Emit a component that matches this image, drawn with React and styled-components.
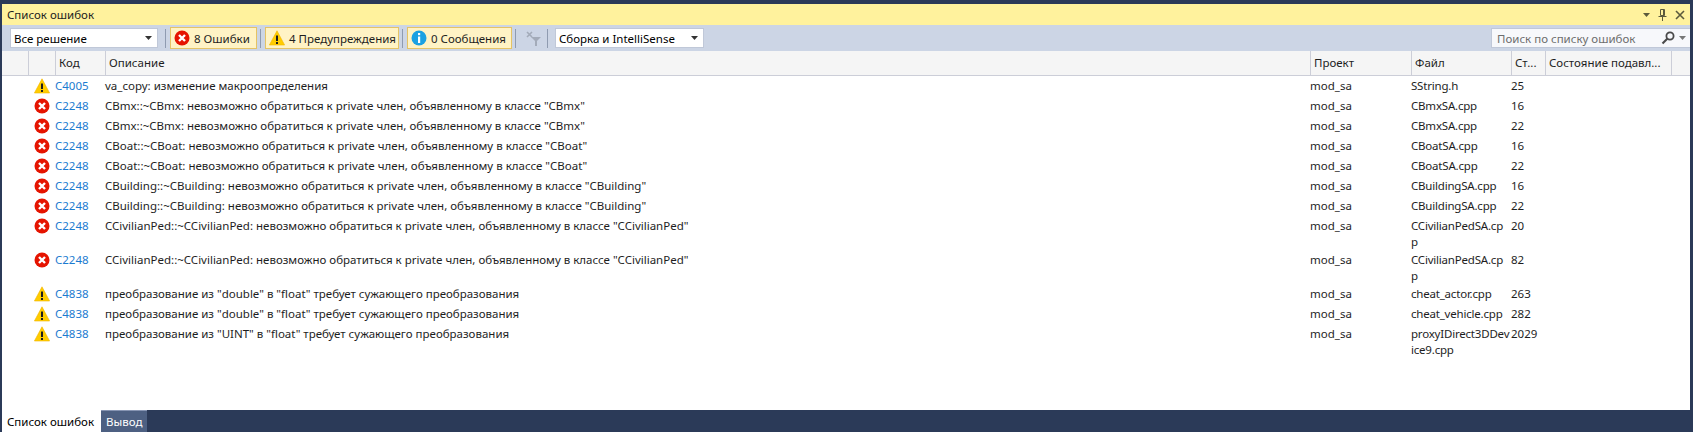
import React from "react";
import styled, { createGlobalStyle } from "styled-components";

const COLUMNS = "26px 27px 50px 1205px 101px 100px 34px 126px 19px";

const errors = [
  { kind: "warning", code: "C4005", text: "va_copy: изменение макроопределения", file: "SString.h", line: "25" },
  { kind: "error", code: "C2248", text: 'CBmx::~CBmx: невозможно обратиться к private член, объявленному в классе "CBmx"', file: "CBmxSA.cpp", line: "16" },
  { kind: "error", code: "C2248", text: 'CBmx::~CBmx: невозможно обратиться к private член, объявленному в классе "CBmx"', file: "CBmxSA.cpp", line: "22" },
  { kind: "error", code: "C2248", text: 'CBoat::~CBoat: невозможно обратиться к private член, объявленному в классе "CBoat"', file: "CBoatSA.cpp", line: "16" },
  { kind: "error", code: "C2248", text: 'CBoat::~CBoat: невозможно обратиться к private член, объявленному в классе "CBoat"', file: "CBoatSA.cpp", line: "22" },
  { kind: "error", code: "C2248", text: 'CBuilding::~CBuilding: невозможно обратиться к private член, объявленному в классе "CBuilding"', file: "CBuildingSA.cpp", line: "16" },
  { kind: "error", code: "C2248", text: 'CBuilding::~CBuilding: невозможно обратиться к private член, объявленному в классе "CBuilding"', file: "CBuildingSA.cpp", line: "22" },
  { kind: "error", code: "C2248", text: 'CCivilianPed::~CCivilianPed: невозможно обратиться к private член, объявленному в классе "CCivilianPed"', file: "CCivilianPedSA.cp\np", line: "20" },
  { kind: "error", code: "C2248", text: 'CCivilianPed::~CCivilianPed: невозможно обратиться к private член, объявленному в классе "CCivilianPed"', file: "CCivilianPedSA.cp\np", line: "82" },
  { kind: "warning", code: "C4838", text: 'преобразование из "double" в "float" требует сужающего преобразования', file: "cheat_actor.cpp", line: "263" },
  { kind: "warning", code: "C4838", text: 'преобразование из "double" в "float" требует сужающего преобразования', file: "cheat_vehicle.cpp", line: "282" },
  { kind: "warning", code: "C4838", text: 'преобразование из "UINT" в "float" требует сужающего преобразования', file: "proxyIDirect3DDev\nice9.cpp", line: "2029" },
];

const GlobalStyle = createGlobalStyle`
  html, body {
    margin: 0;
    padding: 0;
    background: #2b3a58;
  }
  body {
    font-family: "Noto Sans", "Open Sans", sans-serif;
    font-size: 11.5px;
    color: #1e1e1e;
  }
`;

const Window = styled.div`
  width: 1693px;
  height: 432px;
  box-sizing: border-box;
  padding: 4px 3px 0 2px;
  background: #2b3a58;
  display: flex;
  flex-direction: column;
  overflow: hidden;
`;

const TitleBar = styled.div`
  height: 21px;
  flex: none;
  background: #fff29d;
  display: flex;
  align-items: center;
  justify-content: space-between;
  padding: 0 5px;
  color: #1e1e1e;
`;

const TitleIcons = styled.div`
  display: flex;
  align-items: center;
  gap: 8px;
`;

const Toolbar = styled.div`
  height: 26px;
  flex: none;
  background: #ccd5e5;
  display: flex;
  align-items: center;
  padding-left: 8px;
`;

const Select = styled.div`
  width: ${(p) => p.$width}px;
  height: 20px;
  box-sizing: border-box;
  background: #fff;
  border: 1px solid #c0c8d8;
  display: flex;
  align-items: center;
  justify-content: space-between;
  padding: 0 5px 0 3px;
  color: #000;
`;

const Divider = styled.div`
  width: 1px;
  height: 19px;
  background: #8f9bb0;
  margin: 0 ${(p) => p.$right ?? 4}px 0 ${(p) => p.$left ?? 3}px;
`;

const FilterButton = styled.div`
  height: 22px;
  box-sizing: border-box;
  width: ${(p) => p.$width}px;
  background: #fff3c5;
  border: 1px solid #e5c365;
  display: flex;
  align-items: center;
  gap: 4px;
  padding-left: 3px;
  color: #1e1e1e;
  white-space: nowrap;
`;

const FilterIconBox = styled.div`
  display: flex;
  margin: 0 5px 0 6px;
`;

const SearchBox = styled.div`
  margin-left: auto;
  width: 199px;
  height: 20px;
  box-sizing: border-box;
  background: #f7f8fb;
  border: 1px solid #c0c8d8;
  border-right: none;
  display: flex;
  align-items: center;
  justify-content: space-between;
  padding: 0 4px 0 5px;
  color: #6d6d6d;
`;

const SearchIcons = styled.div`
  display: flex;
  align-items: center;
  gap: 4px;
`;

const Body = styled.div`
  flex: 1;
  background: #fff;
  min-height: 0;
`;

const HeaderRow = styled.div`
  display: grid;
  grid-template-columns: ${COLUMNS};
  height: 25px;
  box-sizing: border-box;
  background: #f5f5f5;
  border-bottom: 1px solid #ccced8;
`;

const HeaderCell = styled.div`
  border-left: ${(p) => (p.$first ? "none" : "1px solid #ccced8")};
  padding-left: 3px;
  line-height: 24px;
  white-space: nowrap;
  color: #1e1e1e;
`;

const Row = styled.div`
  display: grid;
  grid-template-columns: ${COLUMNS};
  min-height: 20px;
  padding-top: 2px;
  box-sizing: border-box;
  line-height: 16px;
`;

const IconCell = styled.div`
  grid-column: 2;
  display: flex;
  align-items: flex-start;
  justify-content: center;
`;

const Code = styled.div`
  color: #1b7bd0;
`;

const Cell = styled.div`
  white-space: pre;
  color: #1e1e1e;
  letter-spacing: ${(p) => (p.$tight ? "-0.2px" : "0")};
`;

const TabStrip = styled.div`
  height: 22px;
  flex: none;
  background: #2b3a58;
  display: flex;
  margin-right: -3px;
`;

const Tab = styled.div`
  padding: 0 5px;
  width: ${(p) => p.$width}px;
  box-sizing: border-box;
  line-height: 21px;
  white-space: nowrap;
  background: ${(p) => (p.$active ? "#fff" : "#4d6082")};
  color: ${(p) => (p.$active ? "#000" : "#fff")};
  border-top: 1px solid ${(p) => (p.$active ? "#fff" : "#8795b3")};
`;

const ErrorIcon = () => (
  <svg width="16" height="16" viewBox="0 0 16 16">
    <circle cx="8" cy="8" r="7.5" fill="#e51400" />
    <path d="M5 5l6 6M11 5l-6 6" stroke="#fff" strokeWidth="2.4" />
  </svg>
);

const WarningIcon = () => (
  <svg width="16" height="16" viewBox="0 0 16 16">
    <path d="M8 .8L15.6 15H.4z" fill="#ffcc00" stroke="#f2b600" strokeWidth=".6" />
    <rect x="7" y="5.5" width="2" height="5.5" fill="#1e1e1e" />
    <rect x="7" y="12" width="2" height="2" fill="#1e1e1e" />
  </svg>
);

const InfoIcon = () => (
  <svg width="16" height="16" viewBox="0 0 16 16">
    <circle cx="8" cy="8" r="7.5" fill="#1ba1e2" />
    <rect x="7" y="3" width="2.2" height="2.2" fill="#fff" />
    <rect x="7" y="6.5" width="2.2" height="6.5" fill="#fff" />
  </svg>
);

const FilterIcon = () => (
  <svg width="16" height="16" viewBox="0 0 16 16" fill="#a3abb9">
    <path d="M1 2l5 5M6 2L1 7" stroke="#a3abb9" strokeWidth="1.6" />
    <path d="M5 7h10l-4 4v5H9v-5z" />
  </svg>
);

const Caret = ({ color = "#333" }) => (
  <svg width="7" height="4" viewBox="0 0 7 4">
    <path d="M0 0h7L3.5 4z" fill={color} />
  </svg>
);

const PinIcon = () => (
  <svg width="9" height="12" viewBox="0 0 9 12" fill="none" stroke="#5b5a3c">
    <path d="M2.5.5h4v6h-4zM.5 7.5h8M4.5 8v4M5.5 1v5" />
  </svg>
);

const CloseIcon = () => (
  <svg width="10" height="10" viewBox="0 0 10 10">
    <path d="M1 1l8 8M9 1l-8 8" stroke="#5b5a3c" strokeWidth="1.6" />
  </svg>
);

const SearchIcon = () => (
  <svg width="14" height="14" viewBox="0 0 14 14" fill="none">
    <circle cx="9" cy="5" r="3.6" stroke="#4a4a4a" strokeWidth="1.8" />
    <path d="M6.5 7.5L1.5 12.5" stroke="#4a4a4a" strokeWidth="2.2" />
  </svg>
);

const icons = { error: <ErrorIcon />, warning: <WarningIcon /> };

const App = () => {
  return (
    <Window>
      <GlobalStyle />
      <TitleBar>
        <span>Список ошибок</span>
        <TitleIcons>
          <Caret color="#5b5a3c" />
          <PinIcon />
          <CloseIcon />
        </TitleIcons>
      </TitleBar>
      <Toolbar>
        <Select $width={148}>
          Все решение
          <Caret />
        </Select>
        <Divider $left={7} />
        <FilterButton $width={87}>
          <ErrorIcon />8 Ошибки
        </FilterButton>
        <Divider />
        <FilterButton $width={134}>
          <WarningIcon />4 Предупреждения
        </FilterButton>
        <Divider />
        <FilterButton $width={105}>
          <InfoIcon />0 Сообщения
        </FilterButton>
        <Divider />
        <FilterIconBox>
          <FilterIcon />
        </FilterIconBox>
        <Divider $left={0} $right={7} />
        <Select $width={149}>
          Сборка и IntelliSense
          <Caret />
        </Select>
        <SearchBox>
          Поиск по списку ошибок
          <SearchIcons>
            <SearchIcon />
            <Caret color="#777" />
          </SearchIcons>
        </SearchBox>
      </Toolbar>
      <Body>
        <HeaderRow>
          <HeaderCell $first />
          <HeaderCell />
          <HeaderCell>Код</HeaderCell>
          <HeaderCell>Описание</HeaderCell>
          <HeaderCell>Проект</HeaderCell>
          <HeaderCell>Файл</HeaderCell>
          <HeaderCell>Ст...</HeaderCell>
          <HeaderCell>Состояние подавл...</HeaderCell>
          <HeaderCell />
        </HeaderRow>
        {errors.map((item, i) => (
          <Row key={i}>
            <IconCell>{icons[item.kind]}</IconCell>
            <Code>{item.code}</Code>
            <Cell>{item.text}</Cell>
            <Cell>mod_sa</Cell>
            <Cell $tight>{item.file}</Cell>
            <Cell>{item.line}</Cell>
          </Row>
        ))}
      </Body>
      <TabStrip>
        <Tab $active $width={99}>Список ошибок</Tab>
        <Tab $width={46}>Вывод</Tab>
      </TabStrip>
    </Window>
  );
};

export default App;
